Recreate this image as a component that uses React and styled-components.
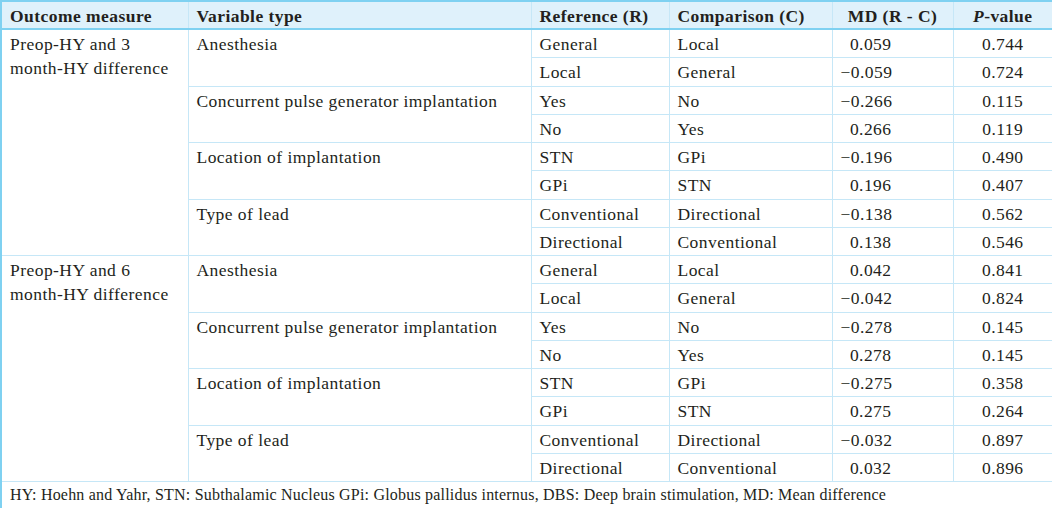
import React from 'react';
import styled, { createGlobalStyle } from 'styled-components';

const GlobalStyle = createGlobalStyle`
  html, body {
    margin: 0;
    padding: 0;
    background: #ffffff;
  }
`;

const Table = styled.table`
  width: 1052px;
  border-collapse: collapse;
  table-layout: fixed;
  font-family: 'Liberation Serif', 'Times New Roman', serif;
  font-size: 17.5px;
  letter-spacing: 0.45px;
  color: #231f20;
  border: 2px solid #7fd1f1;
`;

const HeadCell = styled.th`
  background: #dff1fb;
  font-weight: bold;
  text-align: ${p => p.align || 'left'};
  padding: 2px 8px 0;
  line-height: 24px;
  border-left: 1px solid #c6e7f7;
  border-bottom: 2px solid #7fd1f1;
  white-space: nowrap;
`;

const Cell = styled.td`
  vertical-align: top;
  text-align: ${p => p.align || 'left'};
  padding: ${p => (p.pr ? `2px ${p.pr}px 1px 8px` : '2px 8px 1px')};
  line-height: 24.25px;
  border: 1px solid #c6e7f7;
  white-space: ${p => (p.wrap ? 'normal' : 'nowrap')};
`;

const Footer = styled.td`
  padding: 1px 8px 1px;
  line-height: 24px;
  font-size: 16px;
  letter-spacing: 0.2px;
  border-top: 1px solid #c6e7f7;
  white-space: nowrap;
`;

const groups = [
  {
    outcome: 'Preop-HY and 3 month-HY difference',
    variables: [
      {
        name: 'Anesthesia',
        rows: [
          ['General', 'Local', '0.059', '0.744'],
          ['Local', 'General', '\u22120.059', '0.724'],
        ],
      },
      {
        name: 'Concurrent pulse generator implantation',
        rows: [
          ['Yes', 'No', '\u22120.266', '0.115'],
          ['No', 'Yes', '0.266', '0.119'],
        ],
      },
      {
        name: 'Location of implantation',
        rows: [
          ['STN', 'GPi', '\u22120.196', '0.490'],
          ['GPi', 'STN', '0.196', '0.407'],
        ],
      },
      {
        name: 'Type of lead',
        rows: [
          ['Conventional', 'Directional', '\u22120.138', '0.562'],
          ['Directional', 'Conventional', '0.138', '0.546'],
        ],
      },
    ],
  },
  {
    outcome: 'Preop-HY and 6 month-HY difference',
    variables: [
      {
        name: 'Anesthesia',
        rows: [
          ['General', 'Local', '0.042', '0.841'],
          ['Local', 'General', '\u22120.042', '0.824'],
        ],
      },
      {
        name: 'Concurrent pulse generator implantation',
        rows: [
          ['Yes', 'No', '\u22120.278', '0.145'],
          ['No', 'Yes', '0.278', '0.145'],
        ],
      },
      {
        name: 'Location of implantation',
        rows: [
          ['STN', 'GPi', '\u22120.275', '0.358'],
          ['GPi', 'STN', '0.275', '0.264'],
        ],
      },
      {
        name: 'Type of lead',
        rows: [
          ['Conventional', 'Directional', '\u22120.032', '0.897'],
          ['Directional', 'Conventional', '0.032', '0.896'],
        ],
      },
    ],
  },
];

const App = () => {
  const body = [];
  groups.forEach((g, gi) => {
    const total = g.variables.reduce((n, v) => n + v.rows.length, 0);
    g.variables.forEach((v, vi) => {
      v.rows.forEach((r, ri) => {
        body.push(
          <tr key={`${gi}-${vi}-${ri}`}>
            {vi === 0 && ri === 0 && (
              <Cell rowSpan={total} wrap="1">{g.outcome}</Cell>
            )}
            {ri === 0 && <Cell rowSpan={v.rows.length}>{v.name}</Cell>}
            <Cell>{r[0]}</Cell>
            <Cell>{r[1]}</Cell>
            <Cell align="right" pr={61}>{r[2]}</Cell>
            <Cell align="center">{r[3]}</Cell>
          </tr>
        );
      });
    });
  });

  return (
    <>
      <GlobalStyle />
      <Table>
        <colgroup>
          <col style={{ width: 187 }} />
          <col style={{ width: 343 }} />
          <col style={{ width: 138 }} />
          <col style={{ width: 163 }} />
          <col style={{ width: 121 }} />
          <col style={{ width: 100 }} />
        </colgroup>
        <thead>
          <tr>
            <HeadCell>Outcome measure</HeadCell>
            <HeadCell>Variable type</HeadCell>
            <HeadCell>Reference (R)</HeadCell>
            <HeadCell>Comparison (C)</HeadCell>
            <HeadCell align="center">MD (R - C)</HeadCell>
            <HeadCell align="center"><i>P</i>-value</HeadCell>
          </tr>
        </thead>
        <tbody>
          {body}
          <tr>
            <Footer colSpan={6}>
              HY: Hoehn and Yahr, STN: Subthalamic Nucleus GPi: Globus pallidus internus, DBS: Deep brain stimulation, MD: Mean difference
            </Footer>
          </tr>
        </tbody>
      </Table>
    </>
  );
};

export default App;
